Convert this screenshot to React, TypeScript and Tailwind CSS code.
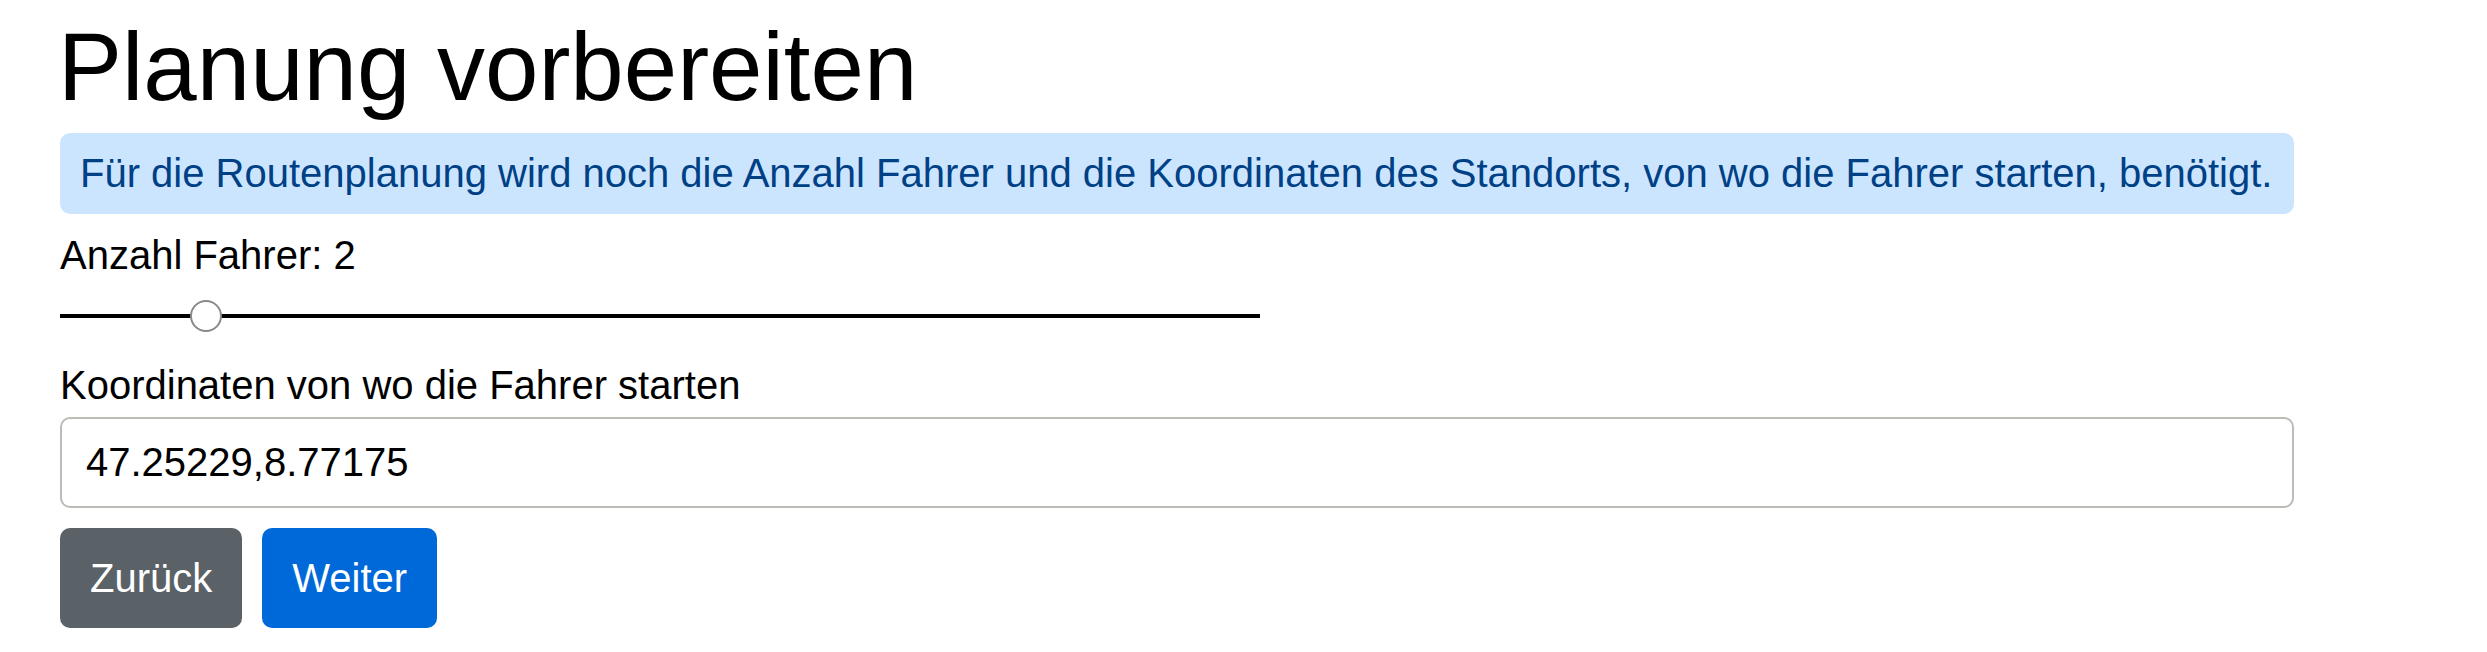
import React, { useState } from 'react';

const MIN_DRIVERS = 1;
const MAX_DRIVERS = 10;

const App: React.FC = () => {
  const [drivers] = useState(2);
  const [coords, setCoords] = useState('47.25229,8.77175');

  // thumb offset along the 1200px track (thumb is 32px wide)
  const thumbLeft = ((drivers - MIN_DRIVERS) / (MAX_DRIVERS - MIN_DRIVERS)) * (1200 - 32);

  return (
    <div className="min-h-screen bg-white px-[60px] pt-[9px] font-['Liberation_Sans',Arial,sans-serif] text-black">
      <div className="w-[2234px]">
        <h1 className="-ml-[2px] text-[96px] font-normal leading-[115px]">Planung vorbereiten</h1>

        {/* Info */}
        <div className="mt-[9px] rounded-[10px] bg-[#cce5ff] px-5 py-4 text-[40px] leading-[49px] text-[#004085]">
          Für die Routenplanung wird noch die Anzahl Fahrer und die Koordinaten des Standorts, von wo die Fahrer starten, benötigt.
        </div>

        <label className="mt-[11px] block text-[40px] leading-[60px]">Anzahl Fahrer: {drivers}</label>

        {/* Slider */}
        <div className="relative mt-[15px] flex h-[32px] w-[1200px] items-center">
          <div className="h-[4px] w-full bg-black" />
          <div
            className="absolute top-0 size-[32px] rounded-full border-2 border-[#8a8a8a] bg-white"
            style={{ left: thumbLeft }}
          />
        </div>

        <label className="mt-[23px] block text-[40px] leading-[60px]">Koordinaten von wo die Fahrer starten</label>
        <input
          value={coords}
          onChange={(e) => setCoords(e.target.value)}
          className="mt-[2px] block h-[91px] w-full rounded-[10px] border-2 border-[#bcbcb6] bg-white px-6 text-[40px] text-black outline-none"
        />

        <div className="mt-5 flex gap-5">
          <button className="flex h-[100px] items-center rounded-[10px] bg-[#5a6268] px-[30px] text-[40px] text-white">
            Zurück
          </button>
          <button className="flex h-[100px] items-center rounded-[10px] bg-[#0069d9] px-[30px] text-[40px] text-white">
            Weiter
          </button>
        </div>
      </div>
    </div>
  );
};

export default App;
